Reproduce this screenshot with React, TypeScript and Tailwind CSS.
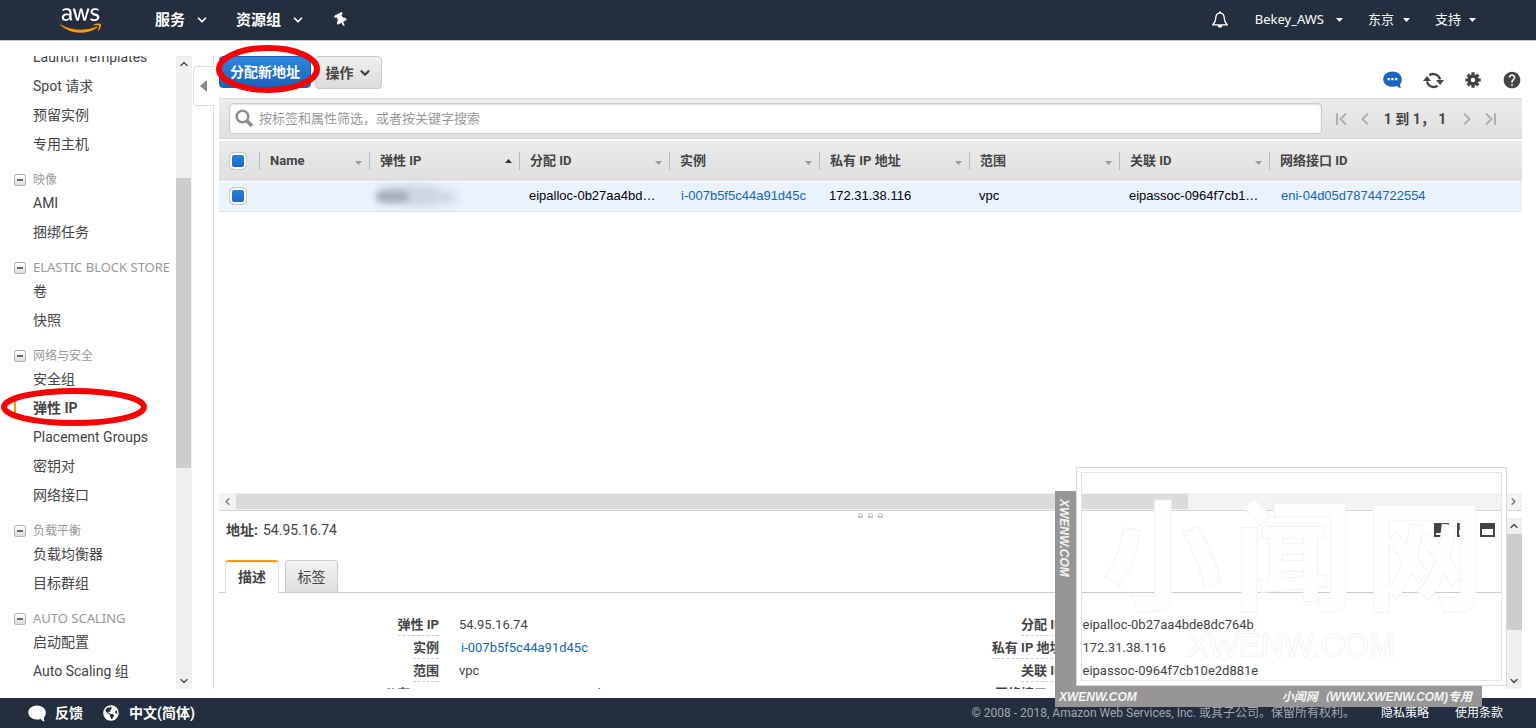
import React from 'react';
import { FaAws, FaThumbtack, FaGlobeAmericas } from 'react-icons/fa';
import { MdHelp } from 'react-icons/md';
import { ChevronDown, ChevronLeft, ChevronRight, ChevronUp } from 'lucide-react';

interface NavGroup {
  title?: string;
  latin?: boolean;
  items: string[];
}

const NAV_GROUPS: NavGroup[] = [
  { items: ['Launch Templates', 'Spot 请求', '预留实例', '专用主机'] },
  { title: '映像', items: ['AMI', '捆绑任务'] },
  { title: 'ELASTIC BLOCK STORE', latin: true, items: ['卷', '快照'] },
  { title: '网络与安全', items: ['安全组', '弹性 IP', 'Placement Groups', '密钥对', '网络接口'] },
  { title: '负载平衡', items: ['负载均衡器', '目标群组'] },
  { title: 'AUTO SCALING', latin: true, items: ['启动配置', 'Auto Scaling 组'] },
];

const ACTIVE_ITEM = '弹性 IP';

const COLUMNS = ['Name', '弹性 IP', '分配 ID', '实例', '私有 IP 地址', '范围', '关联 ID', '网络接口 ID'];

const DETAILS = [
  ['弹性 IP', '54.95.16.74', '分配 ID', 'eipalloc-0b27aa4bde8dc764b'],
  ['实例', 'i-007b5f5c44a91d45c', '私有 IP 地址', '172.31.38.116'],
  ['范围', 'vpc', '关联 ID', 'eipassoc-0964f7cb10e2d881e'],
  ['公有 DNS', 'ec2-54-95-16-74.ap-northeast-1', '网络接口 ID', 'eni-04d05d78744722554'],
];

const Caret = ({ up = false, className = '' }: { up?: boolean; className?: string }) => (
  <svg width="7" height="4" viewBox="0 0 7 4" className={className} fill="currentColor">
    <path d={up ? 'M0 4h7L3.500 0z' : 'M0 0h7L3.500 4z'} />
  </svg>
);

const Highlight = ({ className, rx, ry }: { className: string; rx: number; ry: number }) => (
  <svg
    width={rx * 2 + 8}
    height={ry * 2 + 8}
    className={`pointer-events-none absolute z-20 max-w-none ${className}`}
    fill="none"
    stroke="#fb0000"
    strokeWidth="6"
  >
    <ellipse cx={rx + 4} cy={ry + 4} rx={rx} ry={ry} />
  </svg>
);

const Header = () => (
  <header className="flex h-[41px] shrink-0 items-center border-b border-[#c4c7ca] bg-[#232f3e] text-white">
    <svg width="0" height="0" className="absolute">
      <linearGradient id="awsFill" x1="0" y1="0" x2="0" y2="1">
        <stop offset="0.6" stopColor="#fff" />
        <stop offset="0.6" stopColor="#f90" />
      </linearGradient>
    </svg>
    <a href="#home" aria-label="AWS" className="ml-[60px]">
      <FaAws className="h-[33px] w-[41px] [&_path]:fill-[url(#awsFill)]" />
    </a>
    <nav className="ml-[54px] flex flex-1 items-center text-[15px] font-bold">
      <button type="button" className="flex items-center gap-[10px]">
        服务
        <ChevronDown size={14} strokeWidth={3} />
      </button>
      <button type="button" className="ml-[27px] flex items-center gap-[10px]">
        资源组
        <ChevronDown size={14} strokeWidth={3} />
      </button>
      <button type="button" aria-label="固定" className="ml-[30px]">
        <FaThumbtack className="h-[14px] w-[12px] -rotate-[28deg]" />
      </button>
    </nav>
    <div className="flex items-center pr-[60px] font-['Noto_Sans','Noto_Sans_CJK_SC',sans-serif] text-[13px]">
      <button type="button" aria-label="通知" className="mr-[27px]">
        <svg width="16" height="18" viewBox="0 0 16 18" fill="none" stroke="#fff" strokeWidth="1.300">
          <path d="M8 2C5 2 3.800 4.300 3.800 7c0 3.500-.8 4.500-3 6.800h14.400c-2.200-2.300-3-3.300-3-6.800C12.200 4.300 11 2 8 2z" />
          <path d="M7 1.200h2" strokeWidth="1.600" />
          <path d="M5.500 14h5c0 1.500-1 2.800-2.500 2.800S5.500 15.500 5.500 14z" fill="#fff" stroke="none" />
        </svg>
      </button>
      <button type="button" className="flex items-center gap-[12px]">
        Bekey_AWS
        <Caret />
      </button>
      <button type="button" className="ml-[25px] flex items-center gap-[9px]">
        东京
        <Caret />
      </button>
      <button type="button" className="ml-[25px] flex items-center gap-[8px]">
        支持
        <Caret />
      </button>
    </div>
  </header>
);

const Sidebar = () => (
  <aside className="flex w-48 shrink-0">
    <nav className="flex-1 overflow-hidden whitespace-nowrap text-sm text-[#444]">
      <div className="-mt-[14px]">
        {NAV_GROUPS.map((group, i) => (
          <section key={i}>
            {group.title && (
              <h3
                className={`flex h-[30px] items-center pt-[13px] pl-[14px] font-['Noto_Sans','Noto_Sans_CJK_SC',sans-serif] leading-[17px] text-[#999] ${
                  group.latin ? 'text-[13px]' : 'text-xs'
                }`}
              >
                <button
                  type="button"
                  aria-label="折叠"
                  className="mr-[7px] flex size-3 items-center justify-center rounded-[2px] border border-[#b3b3b3] bg-gradient-to-b from-white to-[#ddd]"
                >
                  <span className="h-[2px] w-[6px] bg-[#666]" />
                </button>
                {group.title}
              </h3>
            )}
            <ul>
              {group.items.map((item) => {
                const active = item === ACTIVE_ITEM;
                return (
                  <li key={item} className="relative flex h-[29px] items-center">
                    {active && <span className="absolute left-[14px] h-4 w-[2px] bg-[#f90]" />}
                    <a href="#nav" className={active ? 'pl-[33px] font-bold' : 'pl-[33px]'}>
                      {item}
                    </a>
                    {active && <Highlight rx={70} ry={16} className="top-[-6px] left-0" />}
                  </li>
                );
              })}
            </ul>
          </section>
        ))}
      </div>
    </nav>
    <div className="flex w-4 flex-col items-center bg-[#f0f0f0] text-[#505050]">
      <ChevronUp size={12} strokeWidth={3} className="my-[2px] shrink-0" />
      <div className="flex w-full flex-1 flex-col">
        <div className="flex-[106]" />
        <div className="mr-px flex-[290] bg-[#cdcdcd]" />
        <div className="flex-[205]" />
      </div>
      <ChevronDown size={12} strokeWidth={3} className="my-[2px] shrink-0" />
    </div>
  </aside>
);

const Toolbar = () => (
  <div className="flex h-[42px] shrink-0 items-start">
    <div className="relative">
      <button
        type="button"
        className="h-8 w-[92px] rounded border border-[#1a5fb4] bg-gradient-to-b from-[#2f86e0] to-[#1564bd] text-sm font-bold text-white"
      >
        分配新地址
      </button>
      <Highlight rx={49} ry={21} className="top-[-12px] left-[-4px]" />
    </div>
    <button
      type="button"
      className="ml-1 flex h-[33px] w-[67px] items-center justify-center gap-1 rounded border border-[#c8c8c8] bg-gradient-to-b from-[#f0f0f0] to-[#dcdcdc] text-sm font-bold text-[#444]"
    >
      操作
      <ChevronDown size={14} strokeWidth={4} />
    </button>
    <div className="mt-[14px] ml-auto flex items-center text-[#444]">
      <button type="button" aria-label="反馈" className="mr-[21px]">
        <svg width="19" height="18" viewBox="0 0 19 18" fill="#1b66c1">
          <path d="M9.500.5C4.300.5.2 3.900.2 8.200s4.100 7.600 9.300 7.600c1.600 0 3-.3 4.300-.8 1 1 2.500 1.800 4.200 2-.7-1-.9-2.400-.8-3.700 1-1.300 1.600-3 1.600-5.100C18.800 3.900 14.700.5 9.500.5z" />
          <path d="M4.500 7h2.300v2.300H4.500zM8.300 7h2.300v2.300H8.300zM12.100 7h2.300v2.300h-2.300z" fill="#fff" />
        </svg>
      </button>
      <button type="button" aria-label="刷新" className="mr-[21px]">
        <svg width="21" height="17" viewBox="0 0 21 17" fill="none" stroke="#444" strokeWidth="2.300">
          <path d="M6.300 3.200A7 7 0 0 1 17 7.500" />
          <path d="M14.700 13.800A7 7 0 0 1 4 9.500" />
          <path d="M13 8h8l-3.800 5zM0 9h8L4 4z" fill="#444" stroke="none" />
        </svg>
      </button>
      <button type="button" aria-label="设置" className="mr-[21px]">
        <svg width="16" height="16" viewBox="0 0 16 16" fill="none" stroke="#444">
          <circle cx="8" cy="8" r="4" strokeWidth="3.600" />
          <path
            d="M8 .3v3M8 12.700v3M.3 8h3M12.700 8h3M2.600 2.600l2 2M11.400 11.400l2 2M2.600 13.400l2-2M11.400 4.600l2-2"
            strokeWidth="3.200"
          />
        </svg>
      </button>
      <button type="button" aria-label="帮助">
        <MdHelp className="size-5" />
      </button>
    </div>
  </div>
);

const FilterBar = () => (
  <div className="flex h-[41px] shrink-0 items-center border-t border-b border-t-[#dadada] border-b-[#d6d6d6] bg-gradient-to-b from-[#ececec] to-[#dfdfdf] pl-[10px]">
    <label className="flex h-[31px] flex-1 items-center rounded border border-[#ccc] bg-white pl-[5px] shadow-[inset_0_1px_2px_#ddd]">
      <svg width="19" height="19" viewBox="0 0 19 19" fill="none" stroke="#8c8c8c">
        <circle cx="7.500" cy="7.500" r="5.800" strokeWidth="2.400" />
        <path d="M12 12l5 5" strokeWidth="3.600" />
      </svg>
      <input
        type="text"
        aria-label="筛选"
        placeholder="按标签和属性筛选，或者按关键字搜索"
        className="ml-[5px] flex-1 bg-transparent text-[13px] outline-none placeholder:text-[#999]"
      />
    </label>
    <div className="flex w-[200px] items-center pl-[14px] text-[#b0b0b0]">
      <button type="button" aria-label="第一页">
        <svg width="11" height="14" viewBox="0 0 11 14" fill="none" stroke="currentColor" strokeWidth="2">
          <path d="M1 1v12M10 1.500L4.500 7l5.500 5.500" />
        </svg>
      </button>
      <button type="button" aria-label="上一页" className="ml-[14px]">
        <svg width="8" height="14" viewBox="0 0 8 14" fill="none" stroke="currentColor" strokeWidth="2">
          <path d="M7 1.500L1.500 7 7 12.500" />
        </svg>
      </button>
      <span className="w-[92px] text-center text-sm font-bold whitespace-pre text-[#444]">1 到 1， 1</span>
      <button type="button" aria-label="下一页" className="ml-[2px]">
        <svg width="8" height="14" viewBox="0 0 8 14" fill="none" stroke="currentColor" strokeWidth="2">
          <path d="M1 1.500L6.500 7 1 12.500" />
        </svg>
      </button>
      <button type="button" aria-label="最后一页" className="ml-[14px]">
        <svg width="11" height="14" viewBox="0 0 11 14" fill="none" stroke="currentColor" strokeWidth="2">
          <path d="M10 1v12M1 1.500L6.500 7 1 12.500" />
        </svg>
      </button>
    </div>
  </div>
);

const RowCheckbox = ({ label }: { label: string }) => (
  <input
    type="checkbox"
    defaultChecked
    aria-label={label}
    className="ml-[10px] block size-[18px] appearance-none rounded-[5px] border border-[#ccc] bg-white shadow-[inset_0_0_0_2px_#fff] checked:bg-gradient-to-b checked:from-[#2f84dd] checked:to-[#1565c0]"
  />
);

const AddressTable = () => (
  <div className="mt-[2px] min-h-0 flex-1 overflow-hidden">
    <table className="w-full table-fixed border-collapse text-left text-[13px]">
      <colgroup>
        <col className="w-[40px]" />
        <col className="w-[110px]" />
        <col className="w-[150px]" />
        <col className="w-[150px]" />
        <col className="w-[150px]" />
        <col className="w-[150px]" />
        <col className="w-[150px]" />
        <col className="w-[150px]" />
        <col />
      </colgroup>
      <thead>
        <tr className="h-10 bg-gradient-to-b from-[#ebebeb] to-[#dfdfdf] text-[#444]">
          <th className="p-0">
            <RowCheckbox label="全选" />
          </th>
          {COLUMNS.map((column, i) => (
            <th key={column} className="p-0">
              <div className="flex h-[18px] items-center justify-between border-l border-[#bbb] pr-[7px] pl-[10px] whitespace-nowrap">
                {column}
                {i < COLUMNS.length - 1 && (
                  <Caret up={i === 1} className={i === 1 ? 'text-[#333]' : 'mt-1 text-[#999]'} />
                )}
              </div>
            </th>
          ))}
        </tr>
      </thead>
      <tbody className="font-['Liberation_Sans','Noto_Sans_CJK_SC',sans-serif] text-black">
        <tr className="h-[30px] border-t border-b border-t-white border-b-[#dcdfe3] bg-[#eaf2fe]">
          <td className="p-0">
            <RowCheckbox label="选择地址" />
          </td>
          <td />
          <td className="p-0">
            {/* redacted address */}
            <div className="relative h-6">
              <span className="absolute top-[2px] left-[10px] h-[18px] w-[60px] rounded-full bg-[#cfd6e0] blur-[4px]" />
              <span className="absolute top-[7px] left-[7px] h-[11px] w-[34px] rounded-full bg-[#a3adbb] blur-[3px]" />
              <span className="absolute top-[7px] left-[40px] h-[12px] w-[48px] rounded-full bg-[#ccd5e1] blur-[5px]" />
            </div>
          </td>
          <td className="truncate p-0 pr-2 pl-[10px]">eipalloc-0b27aa4bde8dc764b</td>
          <td className="truncate p-0 pl-3">
            <a href="#instance" className="text-[#1166bb]">
              i-007b5f5c44a91d45c
            </a>
          </td>
          <td className="p-0 pl-[10px]">172.31.38.116</td>
          <td className="p-0 pl-[10px]">vpc</td>
          <td className="truncate p-0 pr-2 pl-[10px]">eipassoc-0964f7cb10e2d881e</td>
          <td className="p-0 pl-3">
            <a href="#eni" className="text-[#1166bb]">
              eni-04d05d78744722554
            </a>
          </td>
        </tr>
      </tbody>
    </table>
  </div>
);

const HorizontalScrollbar = () => (
  <div className="flex h-[18px] shrink-0 items-center border-b border-[#d4d4d4] bg-[#f3f3f3] text-[#777]">
    <ChevronLeft size={11} strokeWidth={3} className="mx-[3px] shrink-0" />
    <div className="flex h-[15px] flex-1">
      <div className="flex-[953] bg-[#dbdbdb]" />
      <div className="flex-[317]" />
    </div>
    <ChevronRight size={11} strokeWidth={3} className="mx-[3px] shrink-0" />
  </div>
);

const DetailLabel = ({ children }: { children: React.ReactNode }) => (
  <dt className="w-[220px] shrink-0 text-right font-bold">
    <span className="inline-block h-[21px] border-b border-dashed border-[#ccc] leading-[20px]">{children}</span>
  </dt>
);

const DetailPane = () => (
  <div className="flex h-[178px] shrink-0 flex-col text-[#444]">
    <div className="flex h-[7px] shrink-0 items-end justify-center gap-[5px]">
      {[0, 1, 2].map((dot) => (
        <span key={dot} className="size-[5px] rounded-t-full border border-b-2 border-[#c4c4c4]" />
      ))}
    </div>
    <div className="flex min-h-0 flex-1">
      <div className="min-w-0 flex-1 overflow-hidden">
        <div className="flex h-6 items-center pl-[7px] text-sm">
          <span className="mr-[5px] font-bold">地址:</span>
          54.95.16.74
          <div className="ml-auto flex gap-2 pr-[11px]">
            <button type="button" aria-label="最小化">
              <svg width="15" height="14" viewBox="0 0 15 14" fill="#444">
                <path d="M0 0h15v14H0zM2 10v2h11v-2z" fillRule="evenodd" />
              </svg>
            </button>
            <button type="button" aria-label="分屏">
              <svg width="15" height="14" viewBox="0 0 15 14" fill="#444">
                <path d="M0 0h15v14H0zM2 7v5h11V7z" fillRule="evenodd" />
              </svg>
            </button>
            <button type="button" aria-label="最大化">
              <svg width="15" height="14" viewBox="0 0 15 14" fill="#444">
                <path d="M0 0h15v14H0zM2 6v6h11V6z" fillRule="evenodd" />
              </svg>
            </button>
          </div>
        </div>
        <div className="mt-[18px] mr-1 flex gap-[6px] border-b border-[#ccc] pl-[6px] text-sm">
          <button
            type="button"
            className="-mb-px h-[33px] w-[54px] rounded-t border-x border-t-2 border-x-[#ddd] border-t-[#f90] bg-white pb-[2px] font-bold"
          >
            描述
          </button>
          <button
            type="button"
            className="h-8 w-[53px] rounded-t border border-b-0 border-[#ccc] bg-gradient-to-b from-[#f3f3f3] to-[#dedede]"
          >
            标签
          </button>
        </div>
        <dl className="mt-[22px] pr-10 text-[13px]">
          {DETAILS.map(([leftLabel, leftValue, rightLabel, rightValue]) => (
            <div key={leftLabel} className="grid h-[23px] grid-cols-2">
              <div className="flex gap-5">
                <DetailLabel>{leftLabel}</DetailLabel>
                <dd className="leading-[20px]">
                  {leftValue.startsWith('i-') ? (
                    <a href="#instance" className="pl-[2px] text-[#1166bb]">
                      {leftValue}
                    </a>
                  ) : (
                    leftValue
                  )}
                </dd>
              </div>
              <div className="flex gap-5">
                <DetailLabel>{rightLabel}</DetailLabel>
                <dd className="leading-[20px]">{rightValue}</dd>
              </div>
            </div>
          ))}
        </dl>
      </div>
      <div className="flex w-4 flex-col items-center bg-[#f0f0f0] text-[#505050]">
        <ChevronUp size={12} strokeWidth={3} className="my-[2px] shrink-0" />
        <div className="flex w-full flex-1 flex-col">
          <div className="flex-[96] bg-[#cdcdcd]" />
          <div className="flex-[43]" />
        </div>
        <ChevronDown size={12} strokeWidth={3} className="my-[2px] shrink-0" />
      </div>
    </div>
  </div>
);

const Watermark = () => (
  <div className="pointer-events-none absolute right-[29px] bottom-[21px] z-30 h-[240px] w-[452px] whitespace-nowrap text-[#f4f4f4]">
    <div className="absolute bottom-0 left-0 h-[216px] w-[21px] bg-[#979595] pt-2 pr-[3px] font-['Liberation_Sans',sans-serif] text-xs leading-[18px] font-bold italic [writing-mode:vertical-rl]">
      XWENW.COM
    </div>
    <div className="absolute bottom-0 left-0 flex h-[21px] w-[427px] items-center justify-between bg-[#979595] pr-[10px] pl-1 font-['Liberation_Sans','Noto_Sans_CJK_SC',sans-serif] text-xs font-bold italic">
      <span>XWENW.COM</span>
      <span>小闻网（WWW.XWENW.COM)专用</span>
    </div>
    <div className="absolute top-0 right-0 h-[219px] w-[431px] border border-[#d9d9d9]">
      <div className="h-full border-4 border-white">
        <div className="flex h-full flex-col items-center border border-[#e3e6e6]">
          <div className="mt-[17px] flex gap-3 pl-1 font-['Noto_Sans_CJK_SC',sans-serif] text-[119px] leading-[119px] font-bold text-[#fdfefe] [paint-order:stroke_fill] [-webkit-text-stroke:2px_#f1f3f3]">
            <span>小</span>
            <span>闻</span>
            <span>网</span>
          </div>
          <span className="mt-[18px] font-['Liberation_Sans',sans-serif] text-[32px] leading-[36px] text-[#fdfefe] [paint-order:stroke_fill] [-webkit-text-stroke:1px_#e9e9e9]">
            XWENW.COM
          </span>
        </div>
      </div>
    </div>
  </div>
);

const Footer = () => (
  <footer className="flex h-[30px] shrink-0 items-center bg-[#232f3e] text-white">
    <button type="button" className="ml-7 flex items-center gap-[9px] text-sm font-bold">
      <svg width="18" height="17" viewBox="0 0 18 17" fill="#fff">
        <path d="M9 .5C4.100.5.300 3.600.300 7.500S4.100 14.500 9 14.500c1.300 0 2.500-.2 3.600-.6 1 1.200 2.500 2.300 4.200 2.600-.7-1-1-2.600-.8-4 1.200-1.300 1.800-3 1.800-5C17.800 3.600 13.900.5 9 .5z" />
      </svg>
      反馈
    </button>
    <button type="button" className="ml-5 flex items-center gap-[10px] text-sm font-bold">
      <FaGlobeAmericas className="size-4" />
      中文(简体)
    </button>
    <div className="ml-auto flex items-center gap-[26px] pr-[33px] text-xs">
      <span className="text-[#a0a9ad]">© 2008 - 2018, Amazon Web Services, Inc. 或其子公司。保留所有权利。</span>
      <a href="#privacy">隐私策略</a>
      <a href="#terms">使用条款</a>
    </div>
  </footer>
);

export default function App() {
  return (
    <div className="relative flex h-screen flex-col overflow-hidden bg-white font-['Roboto','Noto_Sans_CJK_SC',sans-serif]">
      <Header />
      <div className="flex min-h-0 flex-1 pt-[15px] pb-[9px]">
        <Sidebar />
        <div className="w-[21px] shrink-0">
          <button
            type="button"
            aria-label="收起侧栏"
            className="relative mt-[10px] ml-px flex h-10 w-[21px] items-center rounded-l border border-r-0 border-[#ddd] bg-white pl-[10px]"
          >
            <svg width="7" height="12" viewBox="0 0 7 12" fill="#888" className="-ml-1">
              <path d="M7 0v12L0 6z" />
            </svg>
          </button>
        </div>
        <main className="flex min-w-0 flex-1 flex-col border-l border-[#ddd] pr-[14px] pl-[5px]">
          <Toolbar />
          <FilterBar />
          <AddressTable />
          <HorizontalScrollbar />
          <DetailPane />
        </main>
      </div>
      <Footer />
      <Watermark />
    </div>
  );
}
